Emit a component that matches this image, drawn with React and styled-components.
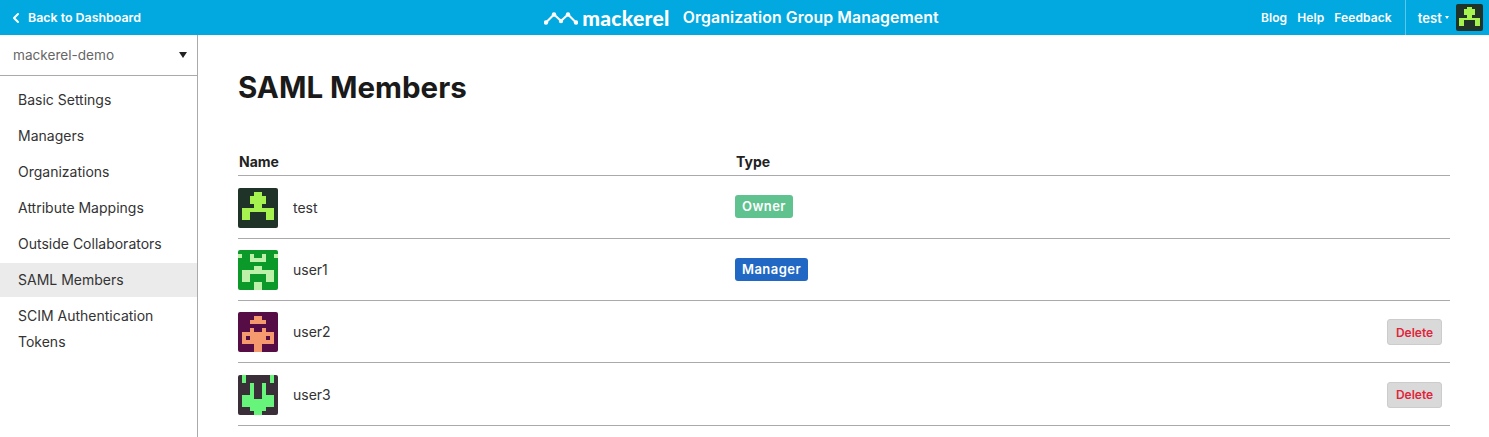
import React from 'react';
import styled, { createGlobalStyle } from 'styled-components';
import { ChevronLeft } from 'lucide-react';

const colors = { brand: '#02a9e0', text: '#222', line: '#aaa' }

const GlobalStyle = createGlobalStyle`
    html, body {
        margin: 0;
        height: 100%;
        overflow: hidden;
        background: #fff;
        font-family: Inter, "Liberation Sans", sans-serif;
        color: ${colors.text};
    }
    #root { height: 100%; }
`

const Page = styled.div`
    height: 100%;
    display: flex;
    flex-direction: column;
`

const Header = styled.header`
    height: 35px;
    flex: none;
    background: ${colors.brand};
    color: #fff;
    display: grid;
    grid-template-columns: 1fr auto 1fr;
    align-items: center;
    font-weight: 600;
`

const BackLink = styled.a`
    display: flex;
    align-items: center;
    gap: 4px;
    padding-left: 8px;
    font-size: 12.4px;
`

const Brand = styled.div`
    display: flex;
    align-items: center;
    padding-right: 6px;
`

const LogoWord = styled.span`
    font-family: Lato, sans-serif;
    font-size: 21px;
    font-weight: 900;
    letter-spacing: 0.3px;
    margin-left: 4px;
    margin-right: 13px;
    line-height: 35px;
`

const AppTitle = styled.span`
    font-size: 15.8px;
    font-weight: 600;
    letter-spacing: 0.1px;
`

const HeaderRight = styled.nav`
    display: flex;
    align-items: center;
    justify-content: flex-end;
    height: 100%;
    font-size: 12px;
    letter-spacing: 0.1px;
`

const NavLink = styled.a`
    margin-left: 10px;
`

const UserMenu = styled.div`
    display: flex;
    align-items: center;
    height: 100%;
    margin-left: 13px;
    padding: 0 6px 0 12px;
    border-left: 1px solid rgba(255, 255, 255, 0.35);
    font-size: 13px;
`

const Caret = styled.i`
    width: 0;
    height: 0;
    margin: 0 7px 0 3px;
    border-left: 2.5px solid transparent;
    border-right: 2.5px solid transparent;
    border-top: 3px solid #fff;
`

const Body = styled.div`
    flex: 1;
    display: flex;
    min-height: 0;
`

const Sidebar = styled.aside`
    width: 197px;
    flex: none;
    border-right: 1px solid ${colors.line};
`

const OrgSelect = styled.div`
    height: 41px;
    box-sizing: border-box;
    border-bottom: 1px solid ${colors.line};
    display: flex;
    align-items: center;
    justify-content: space-between;
    padding: 0 10px 0 13px;
    font-size: 13.6px;
    color: #666;
`

const SelectCaret = styled.i`
    width: 0;
    height: 0;
    border-left: 4px solid transparent;
    border-right: 4px solid transparent;
    border-top: 6px solid #222;
`

const Menu = styled.ul`
    list-style: none;
    margin: 0;
    padding: 7px 0 0;
`

const MenuItem = styled.li`
    margin-bottom: 2px;
    padding: 4px 18px;
    font-size: 14px;
    line-height: 26px;
    color: #333;
    background: ${props => props.$active ? '#ebebeb' : 'transparent'};
`

const Main = styled.main`
    flex: 1;
    min-width: 0;
    padding: 0 39px 0 40px;
`

const Title = styled.h1`
    margin: 33px 0 0;
    font-size: 29.5px;
    line-height: 38px;
    font-weight: 700;
    color: #1a1a1a;
`

const Table = styled.div`
    margin-top: 45px;
`

const HeadRow = styled.div`
    display: grid;
    grid-template-columns: 497px 1fr;
    height: 25px;
    box-sizing: border-box;
    padding-left: 1px;
    border-bottom: 1px solid ${colors.line};
    font-size: 14px;
    line-height: 22px;
    font-weight: 700;
`

const Row = styled.div`
    display: grid;
    grid-template-columns: 55px 442px 1fr auto;
    align-items: center;
    height: ${props => props.$height || 62}px;
    box-sizing: border-box;
    padding-right: 8px;
    border-bottom: 1px solid ${colors.line};
    font-size: 14px;
    color: #333;
`

const AvatarBox = styled.svg`
    display: block;
    margin-top: ${props => props.$nudge || 0}px;
    border-radius: 2px;
`

const Badge = styled.span`
    display: inline-block;
    height: 23px;
    line-height: 23px;
    margin-bottom: 1px;
    padding: 0 7px;
    border-radius: 3px;
    background: ${props => props.$color};
    color: #fff;
    font-size: 13px;
    font-weight: 600;
    letter-spacing: 0.45px;
    vertical-align: middle;
`

const DeleteButton = styled.button`
    width: 55px;
    height: 26px;
    margin-top: 1px;
    padding: 0;
    border: 1px solid #ccc;
    border-radius: 3px;
    background: #d9d9d9;
    color: #e0243a;
    font-family: inherit;
    font-size: 12px;
    font-weight: 600;
`

const sprites = {
    test: {
        bg: '#1f3329', fg: '#a6f24f',
        rows: [
            '..........',
            '....##....',
            '...####...',
            '...####...',
            '....##....',
            '.########.',
            '.##....##.',
            '.##....##.',
            '..........',
            '..........',
        ],
    },
    user1: {
        bg: '#0b9a2a', fg: '#bdf0a8',
        rows: [
            '..........',
            '#..#..#..#',
            '...####...',
            '..........',
            '....##....',
            '.########.',
            '.##....##.',
            '.##....##.',
            '....##....',
            '....##....',
        ],
    },
    user2: {
        bg: '#560d45', fg: '#f59a6e',
        rows: [
            '..........',
            '....##....',
            '...####...',
            '..........',
            '...#..#...',
            '.########.',
            '.#.####.#.',
            '.########.',
            '....##....',
            '....##....',
        ],
    },
    user3: {
        bg: '#3a2e38', fg: '#66f57a',
        rows: [
            '.#......#.',
            '.#......#.',
            '...#..#...',
            '...#..#...',
            '...#..#...',
            '.###..###.',
            '.########.',
            '.########.',
            '...####...',
            '....##....',
        ],
    },
}

const Avatar = ({ name, size, nudge }) => {
    const { bg, fg, rows } = sprites[name]
    return (
        <AvatarBox $nudge={nudge} width={size} height={size} viewBox="0 0 10 10" shapeRendering="crispEdges">
            <rect width="10" height="10" fill={bg} />
            {rows.map((row, y) => row.split('').map((c, x) => c === '#' && <rect key={x + '-' + y} x={x} y={y} width="1" height="1" fill={fg} />))}
        </AvatarBox>
    )
}

const Logo = () => (
    <svg width="34" height="14" viewBox="0 0 34 14">
        <polyline points="2,11.5 10,3.5 17,10 24,3.5 32,11.5" fill="none" stroke="#fff" strokeWidth="2" />
        <circle cx="2" cy="11.5" r="2.2" fill="#fff" />
        <circle cx="10" cy="3.5" r="2.2" fill="#fff" />
        <circle cx="17" cy="10" r="2.2" fill="#fff" />
        <circle cx="24" cy="3.5" r="2.2" fill="#fff" />
        <circle cx="32" cy="11.5" r="2.2" fill="#fff" />
    </svg>
)

const menu = ['Basic Settings', 'Managers', 'Organizations', 'Attribute Mappings', 'Outside Collaborators', 'SAML Members', 'SCIM Authentication Tokens']

const members = [
    { name: 'test', badge: 'Owner', color: '#5fc28f', height: 63, nudge: 2 },
    { name: 'user1', badge: 'Manager', color: '#2168c4' },
    { name: 'user2', deletable: true },
    { name: 'user3', deletable: true, height: 63, nudge: 2 },
]

export default function App() {
    return (
        <Page>
            <GlobalStyle />
            <Header>
                <BackLink><ChevronLeft size={16} strokeWidth={3} />Back to Dashboard</BackLink>
                <Brand>
                    <Logo />
                    <LogoWord>mackerel</LogoWord>
                    <AppTitle>Organization Group Management</AppTitle>
                </Brand>
                <HeaderRight>
                    <NavLink>Blog</NavLink>
                    <NavLink>Help</NavLink>
                    <NavLink>Feedback</NavLink>
                    <UserMenu>test<Caret /><Avatar name="test" size={27} /></UserMenu>
                </HeaderRight>
            </Header>
            <Body>
                <Sidebar>
                    <OrgSelect>mackerel-demo<SelectCaret /></OrgSelect>
                    <Menu>
                        {menu.map(item => <MenuItem key={item} $active={item === 'SAML Members'}>{item}</MenuItem>)}
                    </Menu>
                </Sidebar>
                <Main>
                    <Title>SAML Members</Title>
                    <Table>
                        <HeadRow><span>Name</span><span>Type</span></HeadRow>
                        {members.map(m => (
                            <Row key={m.name} $height={m.height}>
                                <Avatar name={m.name} size={40} nudge={m.nudge} />
                                <span>{m.name}</span>
                                <span>{m.badge && <Badge $color={m.color}>{m.badge}</Badge>}</span>
                                {m.deletable && <DeleteButton>Delete</DeleteButton>}
                            </Row>
                        ))}
                    </Table>
                </Main>
            </Body>
        </Page>
    )
}
